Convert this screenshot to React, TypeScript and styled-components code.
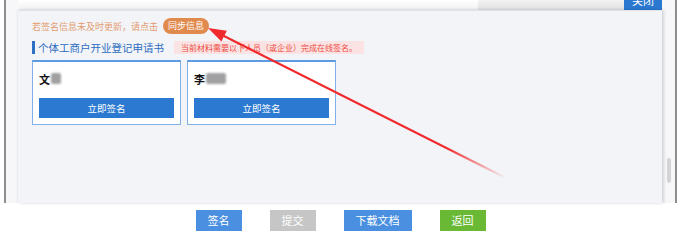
import styled, { createGlobalStyle } from "styled-components";

const GlobalStyle = createGlobalStyle`
  html, body {
    margin: 0;
    padding: 0;
    background: #ffffff;
  }
  body {
    font-family: "Noto Sans CJK SC", "Noto Sans", sans-serif;
  }
`;

const Page = styled.div`
  position: relative;
  width: 681px;
  height: 244px;
  overflow: hidden;
`;

const Frame = styled.div`
  margin: 0 4px;
  height: 203px;
  border-left: 2px solid #8e8e8e;
  border-right: 2px solid #8e8e8e;
  background: #f7f7f9;
  display: flex;
  flex-direction: column;
`;

const Header = styled.div`
  display: flex;
  height: 10px;
  margin: 0 13px 0 12px;
  background: linear-gradient(#f3f3f3, #e0e0e0);
`;

const HeaderTab = styled.div`
  width: 460px;
  background: linear-gradient(#ffffff, #f1f1f1);
`;

const CloseButton = styled.div`
  margin-left: auto;
  margin-top: -10px;
  width: 38px;
  height: 20px;
  background: #2b78d0;
  color: #fff;
  font-size: 11px;
  line-height: 20px;
  text-align: center;
`;

const Body = styled.div`
  flex: 1;
  display: flex;
  padding-left: 12px;
  min-height: 0;
`;

const Panel = styled.div`
  width: 644px;
  box-sizing: border-box;
  background: #f2f4f8;
  border-top: 1px solid #dfe2e8;
  box-shadow: 2px 0 3px rgba(0, 0, 0, 0.14), -1px 0 2px rgba(0, 0, 0, 0.06);
  padding: 7px 14px 0;
  display: flex;
  flex-direction: column;
`;

const ScrollTrack = styled.div`
  flex: 1;
  display: flex;
  justify-content: center;
  padding-top: 148px;
`;

const ScrollThumb = styled.div`
  width: 4px;
  height: 25px;
  border-radius: 2px;
  background: #d4d4d6;
`;

const SyncRow = styled.div`
  display: flex;
  align-items: center;
  height: 16px;
`;

const Hint = styled.span`
  font-size: 9px;
  color: #e39c70;
  white-space: nowrap;
`;

const SyncPill = styled.span`
  margin-left: 5px;
  height: 16px;
  padding: 0 5px;
  border-radius: 8px;
  background: #e08a4e;
  color: #fff;
  font-size: 9px;
  line-height: 16px;
`;

const TitleRow = styled.div`
  display: flex;
  align-items: center;
  margin-top: 7px;
  height: 13px;
`;

const Title = styled.span`
  border-left: 3px solid #2f6fc4;
  padding-left: 3px;
  font-size: 10.5px;
  line-height: 13px;
  color: #2d6cc0;
  white-space: nowrap;
`;

const Notice = styled.span`
  margin-left: 10px;
  height: 13px;
  padding: 0 7px;
  background: #fbe3e3;
  color: #ee4a40;
  font-size: 8px;
  line-height: 13px;
  white-space: nowrap;
`;

const Cards = styled.div`
  display: flex;
  gap: 6px;
  margin-top: 6px;
`;

const Card = styled.div`
  width: 149px;
  height: 65px;
  box-sizing: border-box;
  background: #fff;
  border: 1px solid #80b0e8;
  border-top: 2px solid #5c9be2;
  padding: 0 6px 6px;
  display: flex;
  flex-direction: column;
`;

const NameRow = styled.div`
  height: 36px;
  display: flex;
  align-items: center;
  padding-bottom: 3px;
  box-sizing: border-box;
  font-size: 11px;
  font-weight: 700;
  color: #111;
`;

const Blur = styled.span<{ $w: number }>`
  display: inline-block;
  width: ${(p) => p.$w}px;
  height: 11px;
  margin-left: 1px;
  border-radius: 2px;
  background: #a0a0a2;
  filter: blur(1px);
`;

const SignButton = styled.div`
  height: 20px;
  background: #2b79d1;
  color: #fff;
  font-size: 9.5px;
  line-height: 20px;
  text-align: center;
`;

const Footer = styled.div`
  display: flex;
  justify-content: center;
  gap: 28px;
  padding-top: 7px;
`;

const FootButton = styled.div<{ $bg: string }>`
  height: 21px;
  padding: 0 12px;
  background: ${(p) => p.$bg};
  color: #fff;
  font-size: 11px;
  line-height: 21px;
`;

const Overlay = styled.svg`
  position: absolute;
  left: 0;
  top: 0;
  pointer-events: none;
`;

const signers = [
  { name: "文", blur: 10 },
  { name: "李", blur: 20 },
];

const footButtons = [
  { label: "签名", bg: "#4a8fe0" },
  { label: "提交", bg: "#c6c6c6" },
  { label: "下载文档", bg: "#4a8fe0" },
  { label: "返回", bg: "#6ab934" },
];

export default function App() {
  return (
    <Page>
      <GlobalStyle />
      <Frame>
        <Header>
          <HeaderTab />
          <CloseButton>关闭</CloseButton>
        </Header>
        <Body>
          <Panel>
            <SyncRow>
              <Hint>若签名信息未及时更新，请点击</Hint>
              <SyncPill>同步信息</SyncPill>
            </SyncRow>
            <TitleRow>
              <Title>个体工商户开业登记申请书</Title>
              <Notice>当前材料需要以下人员（或企业）完成在线签名。</Notice>
            </TitleRow>
            <Cards>
              {signers.map((s) => (
                <Card key={s.name}>
                  <NameRow>
                    {s.name}
                    <Blur $w={s.blur} />
                  </NameRow>
                  <SignButton>立即签名</SignButton>
                </Card>
              ))}
            </Cards>
          </Panel>
          <ScrollTrack>
            <ScrollThumb />
          </ScrollTrack>
        </Body>
      </Frame>
      <Footer>
        {footButtons.map((b) => (
          <FootButton key={b.label} $bg={b.bg}>
            {b.label}
          </FootButton>
        ))}
      </Footer>
      <Overlay width="681" height="244" viewBox="0 0 681 244">
        <defs>
          <linearGradient id="tail" x1="208" y1="28" x2="506" y2="178" gradientUnits="userSpaceOnUse">
            <stop offset="0" stopColor="#f02a2c" />
            <stop offset="0.8" stopColor="#f02a2c" />
            <stop offset="1" stopColor="#f02a2c" stopOpacity="0" />
          </linearGradient>
        </defs>
        <line x1="220" y1="34" x2="506" y2="178" stroke="url(#tail)" strokeWidth="2" />
        <polygon points="208,28 226.8,30.7 221.4,41.5" fill="#f02a2c" />
      </Overlay>
    </Page>
  );
}
